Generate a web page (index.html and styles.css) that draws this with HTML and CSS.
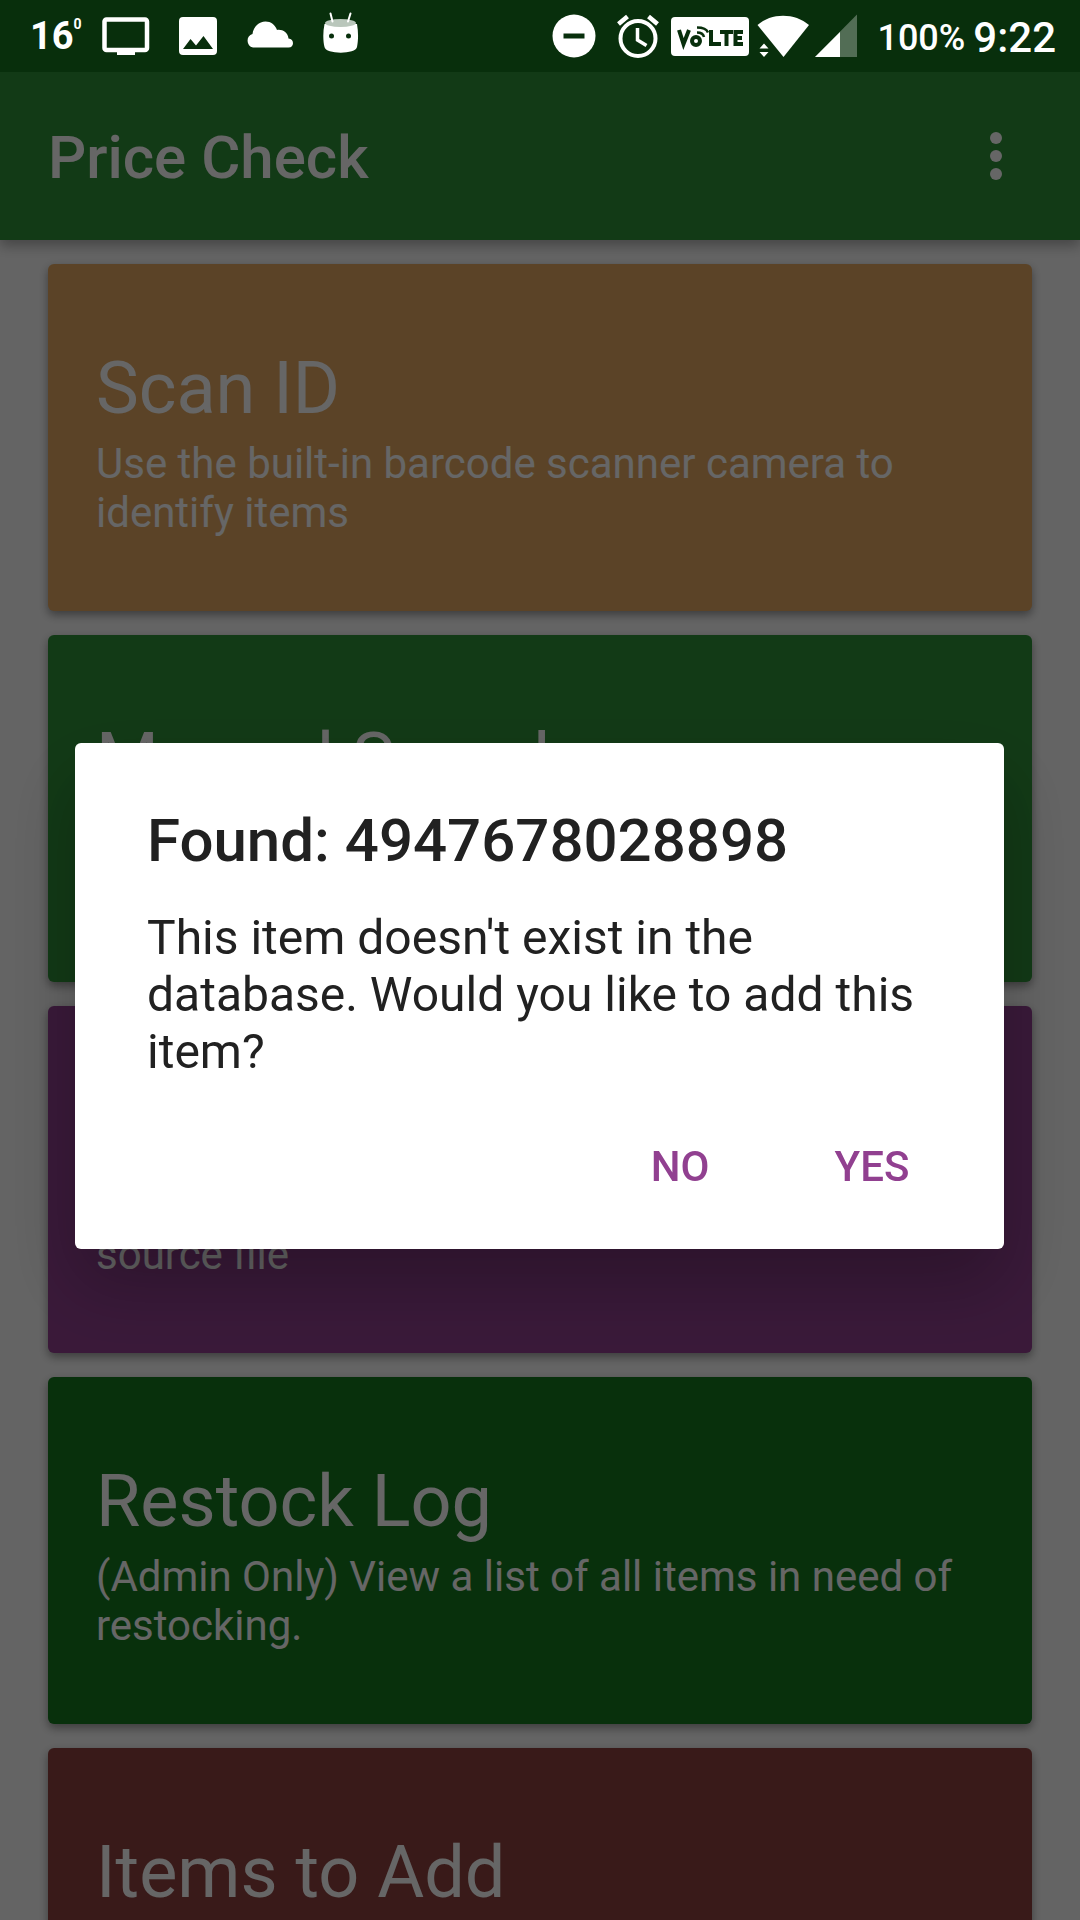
FILE: index.html
```html
<!DOCTYPE html>
<html lang="en">
<head>
<meta charset="utf-8">
<meta name="viewport" content="width=device-width, initial-scale=1">
<title>Price Check</title>
<link rel="stylesheet" href="styles.css">
</head>
<body>
<div class="status-bar">
  <div class="notifications">
    <span class="temperature">16<sup class="degree">0</sup></span>
    <svg class="icon-cast" width="48" height="38" viewBox="0 0 48 38" aria-hidden="true"><rect x="2.500" y="2.500" width="42.500" height="30.500" rx="2" fill="none" stroke="#fff" stroke-width="4.500"/><path d="M15 33h18v5H15z" fill="#fff"/></svg>
    <svg class="icon-image" width="38" height="38" viewBox="0 0 38 38" aria-hidden="true"><path fill="#fff" fill-rule="evenodd" d="M4 0h30a4 4 0 0 1 4 4v30a4 4 0 0 1-4 4H4a4 4 0 0 1-4-4V4a4 4 0 0 1 4-4zM4 32h30L24.500 19 17 28.500 11.500 22z"/></svg>
    <svg class="icon-cloud" width="48" height="38" viewBox="0 0 48 38" aria-hidden="true"><path fill="#fff" d="M7 30.500a7 7 0 0 1-.5-13.500C7.500 9.500 13 4.500 19.500 4.500c5.500 0 9.500 3.200 11.500 8.500 5-1 11 2.500 11.500 8.500 6 .5 6 9 0 9z"/></svg>
    <svg class="icon-android" width="36" height="48" viewBox="0 0 36 48" aria-hidden="true"><path d="M1.500 12C-.2 20 0 29 1.500 35c1 7.500 31.500 7.500 32.500 0 1.300-6 1.500-15 0-23z" fill="#fff"/><ellipse cx="17.500" cy="11" rx="15.500" ry="4" fill="#b9c6bb"/><path d="M7.500 1.500l2 8M27.500 1.500l-2.500 8" stroke="#fff" stroke-width="2" stroke-linecap="round"/><circle cx="8.500" cy="24" r="2.500" fill="#082f0c"/><circle cx="25.500" cy="24" r="2.500" fill="#082f0c"/></svg>
  </div>
  <div class="system">
    <svg class="icon-dnd" width="44" height="44" viewBox="0 0 44 44" aria-hidden="true"><circle cx="22" cy="22" r="21.500" fill="#fff"/><path d="M11.500 22h21" stroke="#082f0c" stroke-width="5"/></svg>
    <svg class="icon-alarm" width="42" height="44" viewBox="0 0 42 44" fill="none" stroke="#fff" aria-hidden="true"><circle cx="21" cy="24.500" r="17.500" stroke-width="4"/><path d="M20.500 14v12l9 5.500" stroke-width="3.500"/><path d="M1.500 10l9-7.500M40.500 10l-9-7.500" stroke-width="4.500"/></svg>
    <svg class="icon-volte" width="78" height="39" viewBox="0 0 78 39" aria-label="VoLTE"><rect width="78" height="39" rx="4" fill="#fff"/><g fill="none" stroke="#082f0c" stroke-width="4"><path d="M8 13l4.500 14L18 13"/><circle cx="25" cy="24" r="4"/><path d="M40 13v14h10M49 15h13M55.500 15v14M72 15h-7.500v12H72M64.500 21H71"/><path d="M26 15.500q6 0 7 4.500M26 10.500q9 0 11 5" stroke-width="2.500"/></g></svg>
    <svg class="icon-wifi" width="54" height="44" viewBox="0 0 54 44" fill="#fff" aria-hidden="true"><path d="M.5 11C14-1.500 38-1.500 52 11L26.500 43z"/><path d="M2.500 34.500l4.500-5 4.500 5zM2.500 38l4.500 5 4.500-5z"/></svg>
    <svg class="icon-signal" width="42" height="44" viewBox="0 0 42 44" fill="#fff" aria-hidden="true"><path d="M42 .5V43H0z" opacity=".3"/><path d="M25 18V43H0z"/></svg>
    <span class="battery">100%</span>
    <time class="clock">9:22</time>
  </div>
</div>

<header class="app-bar">
  <h1 class="app-title">Price Check</h1>
  <button class="menu-button" type="button" aria-label="More options"><svg width="12" height="48" viewBox="0 0 12 48" fill="#fff"><circle cx="6" cy="6" r="6"/><circle cx="6" cy="24" r="6"/><circle cx="6" cy="42" r="6"/></svg></button>
</header>

<main class="cards">
  <section class="card card-scan"><h2 class="card-title">Scan ID</h2><p class="card-text">Use the built-in barcode scanner camera to identify items</p></section>
  <section class="card card-search"><h2 class="card-title">Manual Search</h2></section>
  <section class="card card-source"><h2 class="card-title">&nbsp;</h2><p class="card-text"><br>source file</p></section>
  <section class="card card-restock"><h2 class="card-title">Restock Log</h2><p class="card-text">(Admin Only) View a list of all items in need of restocking.</p></section>
  <section class="card card-add"><h2 class="card-title">Items to Add</h2></section>
</main>

<div class="scrim">
  <div class="dialog" role="alertdialog" aria-modal="true" aria-labelledby="dialog-title" aria-describedby="dialog-text">
    <h2 class="dialog-title" id="dialog-title">Found: 4947678028898</h2>
    <p class="dialog-text" id="dialog-text">This item doesn't exist in the database. Would you like to add this item?</p>
    <div class="dialog-actions">
      <button class="dialog-button" type="button">NO</button>
      <button class="dialog-button" type="button">YES</button>
    </div>
  </div>
</div>
</body>
</html>
```
FILE: styles.css
```css
* {
  box-sizing: border-box;
}

html {
  height: 100%;
  overflow: hidden;
}

body {
  display: flex;
  flex-direction: column;
  height: 100%;
  margin: 0;
  overflow: hidden;
  background: #fafafa;
  color: #fff;
  font-family: Roboto, "Noto Sans", sans-serif;
}

h1,
h2,
p {
  margin: 0;
}

button {
  border: 0;
  background: none;
  font: inherit;
}

svg {
  display: block;
  flex: none;
}

/* Status bar stays above the scrim */
.status-bar {
  position: relative;
  z-index: 3;
  display: flex;
  flex: none;
  justify-content: space-between;
  align-items: center;
  height: 72px;
  padding: 0 24px 0 30px;
  background: #082f0c;
}

.notifications,
.system {
  display: flex;
  align-items: center;
}

.notifications {
  gap: 29px;
}

.temperature {
  display: flex;
  width: 43px;
  font-size: 38px;
  font-weight: 700;
  line-height: 48px;
}

.degree {
  font-size: 14px;
  line-height: 24px;
}

.system {
  gap: 8px;
}

.icon-dnd {
  margin-right: 13px;
}

.icon-alarm {
  margin-right: 4px;
}

.icon-wifi {
  margin-right: -4px;
}

.battery {
  margin-left: 12px;
  padding-top: 3px;
  font-size: 36px;
  font-weight: 500;
}

.clock {
  padding-top: 2px;
  font-size: 42px;
  font-weight: 500;
}

.app-bar {
  position: relative;
  z-index: 1;
  display: flex;
  flex: none;
  justify-content: space-between;
  align-items: center;
  height: 168px;
  padding: 0 48px;
  background: #2f9138;
  box-shadow: 0 6px 12px rgba(0, 0, 0, 0.3);
}

.app-title {
  padding-top: 3px;
  font-size: 60px;
  font-weight: 500;
  line-height: 72px;
}

.menu-button {
  display: flex;
  justify-content: center;
  width: 72px;
  padding: 12px 0;
}

.cards {
  display: flex;
  flex: 1;
  flex-direction: column;
  gap: 24px;
  min-height: 0;
  padding: 24px 48px 0;
  overflow: hidden;
}

.card {
  flex: none;
  min-height: 347px;
  padding: 83px 48px 72px;
  border-radius: 6px;
  box-shadow: 0 4px 10px rgba(0, 0, 0, 0.4);
}

.card-scan {
  background: #e3a862;
}

.card-search {
  background: #2f9138;
}

.card-source {
  background: #914090;
}

.card-restock {
  background: #14781f;
}

.card-add {
  background: #8f433f;
}

.card-title {
  font-size: 72px;
  font-weight: 400;
  line-height: 84px;
}

.card-text {
  margin-top: 8px;
  font-size: 42px;
  line-height: 49px;
}

.scrim {
  position: fixed;
  inset: 0;
  z-index: 2;
  display: flex;
  justify-content: center;
  align-items: center;
  padding: 72px 76px 0 75px;
  background: rgba(0, 0, 0, 0.6);
}

.dialog {
  width: 100%;
  padding: 62px 36px 28px 72px;
  border-radius: 6px;
  background: #fff;
  box-shadow: 0 36px 72px rgba(0, 0, 0, 0.25);
  color: #212121;
}

.dialog-title {
  font-size: 60px;
  font-weight: 500;
  line-height: 72px;
}

.dialog-text {
  margin-top: 32px;
  padding-right: 36px;
  font-size: 48px;
  line-height: 57px;
}

.dialog-actions {
  display: flex;
  justify-content: flex-end;
  margin-top: 33px;
}

.dialog-button {
  min-width: 192px;
  padding: 24px;
  color: #914090;
  font-size: 42px;
  font-weight: 500;
  line-height: 60px;
}
```
